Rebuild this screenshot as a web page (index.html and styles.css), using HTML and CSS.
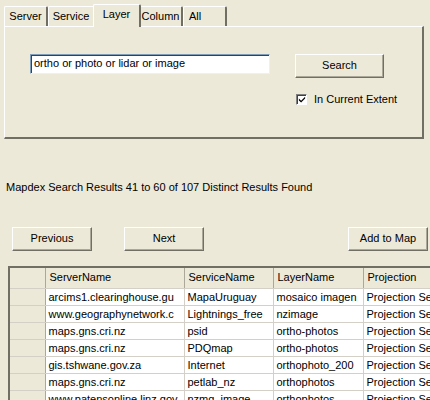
FILE: index.html
```html
<!DOCTYPE html>
<html>
<head>
<meta charset="utf-8">
<link rel="stylesheet" href="styles.css">
</head>
<body>
<div class="tabs">
  <div class="tab w44">Server</div>
  <div class="tab w47">Service</div>
  <div class="tab active">Layer</div>
  <div class="tab w44">Column</div>
  <div class="tab w44 left">All</div>
</div>
<div class="panel">
  <div class="search-row">
    <div class="input">ortho or photo or lidar or image</div>
    <div class="side">
      <div class="btn search">Search</div>
      <label class="check">
        <span class="box"><svg width="9" height="9" viewBox="0 0 9 9"><path d="M1 3.5 L3.5 6 L8 1.5 L8 3.5 L3.5 8 L1 5.5 Z" fill="#000"/></svg></span>
        <span>In Current Extent</span>
      </label>
    </div>
  </div>
</div>
<div class="status">Mapdex Search Results 41 to 60 of 107 Distinct Results Found</div>
<div class="nav">
  <div class="btn">Previous</div>
  <div class="btn">Next</div>
  <div class="spacer"></div>
  <div class="btn">Add to Map</div>
</div>
<div class="grid">
  <table>
    <colgroup><col class="c0"><col class="c1"><col class="c2"><col class="c3"><col class="c4"></colgroup>
    <thead>
      <tr><th class="rh"></th><th>ServerName</th><th>ServiceName</th><th>LayerName</th><th>Projection</th></tr>
    </thead>
    <tbody>
      <tr><td class="rh"></td><td>arcims1.clearinghouse.gu</td><td>MapaUruguay</td><td>mosaico imagen</td><td>Projection Se</td></tr>
      <tr><td class="rh"></td><td>www.geographynetwork.c</td><td>Lightnings_free</td><td>nzimage</td><td>Projection Se</td></tr>
      <tr><td class="rh"></td><td>maps.gns.cri.nz</td><td>psid</td><td>ortho-photos</td><td>Projection Se</td></tr>
      <tr><td class="rh"></td><td>maps.gns.cri.nz</td><td>PDQmap</td><td>ortho-photos</td><td>Projection Se</td></tr>
      <tr><td class="rh"></td><td>gis.tshwane.gov.za</td><td>Internet</td><td>orthophoto_200</td><td>Projection Se</td></tr>
      <tr><td class="rh"></td><td>maps.gns.cri.nz</td><td>petlab_nz</td><td>orthophotos</td><td>Projection Se</td></tr>
      <tr><td class="rh"></td><td>www.patensonline.linz.gov</td><td>nzmg_image</td><td>orthophotos</td><td>Projection Se</td></tr>
    </tbody>
  </table>
</div>
</body>
</html>
```

FILE: styles.css
```css
html, body {
  margin: 0;
  padding: 0;
  background: #ECE9D8;
  font-family: "Liberation Sans", Arial, sans-serif;
  font-size: 11px;
  color: #000;
  width: 430px;
  height: 400px;
  overflow: hidden;
}

.tabs {
  display: flex;
  align-items: flex-end;
  padding-left: 4px;
  height: 26px;
  box-sizing: border-box;
}

.tab {
  flex: none;
  height: 20px;
  line-height: 19px;
  padding: 0;
  text-align: center;
  box-sizing: border-box;
  border-top: 1px solid #fff;
  border-left: 1px solid #fff;
  border-right: 2px solid #716F64;
  border-top-left-radius: 2px;
  border-top-right-radius: 2px;
  white-space: nowrap;
}

.tab.w44 { width: 44px; }
.tab.w47 { width: 47px; }
.tab.left { text-align: left; padding-left: 5px; }

.tab.active {
  width: 48px;
  height: 23px;
  line-height: 19px;
  margin: 0 -2px 0 -2px;
  position: relative;
  top: 1px;
  background: #ECE9D8;
  z-index: 1;
}

.panel {
  margin: 0 6px 0 4px;
  height: 113px;
  box-sizing: border-box;
  border-top: 1px solid #fff;
  border-left: 1px solid #fff;
  border-right: 2px solid #716F64;
  border-bottom: 2px solid #716F64;
  padding: 27px 0 0 25px;
}

.search-row {
  display: flex;
  align-items: flex-start;
  gap: 25px;
}

.input {
  width: 240px;
  height: 20px;
  box-sizing: border-box;
  background: #fff;
  border-top: 1px solid #7F9DB9;
  border-left: 1px solid #7F9DB9;
  border-right: 1px solid #F0F0F0;
  border-bottom: 1px solid #F0F0F0;
  box-shadow: inset 1px 1px 0 #404040;
  line-height: 17px;
  padding-left: 3px;
  white-space: nowrap;
  overflow: hidden;
}

.side {
  display: flex;
  flex-direction: column;
  align-items: flex-start;
  gap: 15px;
}

.btn {
  width: 80px;
  height: 24px;
  box-sizing: border-box;
  background: #ECE9D8;
  border-top: 1px solid #fff;
  border-left: 1px solid #fff;
  border-right: 1px solid #716F64;
  border-bottom: 1px solid #716F64;
  box-shadow: inset -1px -1px 0 #ACA899;
  text-align: center;
  line-height: 21px;
}

.btn.search {
  width: 89px;
}

.check {
  display: flex;
  align-items: center;
  gap: 7px;
  margin-left: 1px;
}

.box {
  width: 11px;
  height: 11px;
  box-sizing: border-box;
  background: #fff;
  border-top: 1px solid #808080;
  border-left: 1px solid #808080;
  border-right: 1px solid #fff;
  border-bottom: 1px solid #fff;
  box-shadow: inset 1px 1px 0 #404040;
  display: flex;
  align-items: center;
  justify-content: center;
}

.box svg {
  display: block;
  margin: 1px 0 0 1px;
}

.status {
  margin: 41px 0 0 6px;
  height: 14px;
  line-height: 14px;
  white-space: nowrap;
}

.nav {
  display: flex;
  margin: 33px 2px 0 12px;
  gap: 32px;
  height: 24px;
}

.spacer {
  flex: 1;
}

.grid {
  margin: 15px 0 0 8px;
  height: 140px;
  overflow: hidden;
  border-top: 2px solid #716F64;
  border-left: 2px solid #716F64;
}

table {
  border-collapse: collapse;
  table-layout: fixed;
  width: 480px;
}

col.c0 { width: 35px; }
col.c1 { width: 139px; }
col.c2 { width: 89px; }
col.c3 { width: 90px; }
col.c4 { width: 127px; }

th, td {
  height: 17px;
  padding: 0 0 0 3px;
  text-align: left;
  font-weight: normal;
  white-space: nowrap;
  overflow: hidden;
  line-height: 16px;
  box-sizing: border-box;
}

th {
  height: 20px;
  background: #ECE9D8;
  border-right: 1px solid #ACA899;
  border-bottom: 1px solid #D4D0C8;
  padding-left: 4px;
  line-height: 19px;
}

td {
  background: #fff;
  border-right: 1px solid #D4D0C8;
  border-bottom: 1px solid #D4D0C8;
}

td.rh, th.rh {
  background: #ECE9D8;
  border-right: 1px solid #ACA899;
  border-bottom: 1px solid #D4D0C8;
}
```
